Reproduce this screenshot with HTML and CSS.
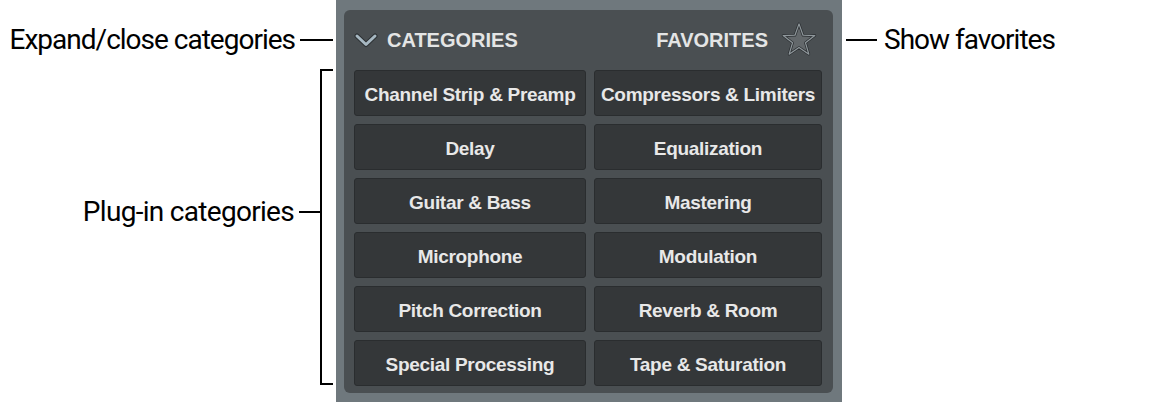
FILE: index.html
```html
<!DOCTYPE html>
<html>
<head>
<meta charset="utf-8">
<link rel="stylesheet" href="styles.css">
</head>
<body>
<div class="page">
  <div class="left">
    <div class="callout callout-top">
      <span class="note">Expand/close categories</span>
      <span class="lead lead-top"></span>
    </div>
    <div class="bracket-row">
      <div class="callout callout-mid">
        <span class="note">Plug-in categories</span>
        <span class="lead lead-mid"></span>
      </div>
      <div class="bracket"></div>
    </div>
  </div>
  <div class="outer">
    <div class="inner">
      <div class="header">
        <div class="hdr-left">
          <svg class="chev" width="24" height="16" viewBox="0 0 24 16">
            <path d="M3 3 L12 11.5 L21 3" fill="none" stroke="#2c3134" stroke-width="5" stroke-linecap="round" stroke-linejoin="round"/>
            <path d="M3 3 L12 11.5 L21 3" fill="none" stroke="#a7b8c2" stroke-width="3" stroke-linecap="round" stroke-linejoin="round"/>
          </svg>
          <span class="hdr-title">CATEGORIES</span>
        </div>
        <div class="hdr-right">
          <span class="hdr-title">FAVORITES</span>
          <svg class="star" width="38" height="36" viewBox="0 0 34 32">
            <path d="M17 2.5 L20.6 12.6 L31.2 12.9 L22.8 19.4 L25.8 29.6 L17 23.6 L8.2 29.6 L11.2 19.4 L2.8 12.9 L13.4 12.6 Z" fill="#63686b" stroke="#2a2e31" stroke-width="2.4" stroke-linejoin="round"/>
            <path d="M17 2.5 L20.6 12.6 L31.2 12.9 L22.8 19.4 L25.8 29.6 L17 23.6 L8.2 29.6 L11.2 19.4 L2.8 12.9 L13.4 12.6 Z" fill="none" stroke="#8f979b" stroke-width="1.1" stroke-linejoin="round"/>
          </svg>
        </div>
      </div>
      <div class="grid">
        <button class="cat">Channel Strip &amp; Preamp</button>
        <button class="cat">Compressors &amp; Limiters</button>
        <button class="cat">Delay</button>
        <button class="cat">Equalization</button>
        <button class="cat">Guitar &amp; Bass</button>
        <button class="cat">Mastering</button>
        <button class="cat">Microphone</button>
        <button class="cat">Modulation</button>
        <button class="cat">Pitch Correction</button>
        <button class="cat">Reverb &amp; Room</button>
        <button class="cat">Special Processing</button>
        <button class="cat">Tape &amp; Saturation</button>
      </div>
    </div>
  </div>
  <div class="right">
    <div class="callout callout-right">
      <span class="lead lead-right"></span>
      <span class="note">Show favorites</span>
    </div>
  </div>
</div>
</body>
</html>
```

FILE: styles.css
```css
html, body {
  margin: 0;
  padding: 0;
  background: #ffffff;
}
.page {
  display: flex;
  width: 1170px;
  height: 402px;
  overflow: hidden;
}
.left {
  width: 336px;
  flex: none;
  display: flex;
  flex-direction: column;
}
.note {
  font-family: Roboto, "Liberation Sans", sans-serif;
  font-size: 28px;
  letter-spacing: -1px;
  color: #000;
  white-space: nowrap;
  line-height: 1;
}
.callout-mid .note {
  letter-spacing: -0.7px;
}
.callout {
  display: flex;
  align-items: center;
}
.callout-top {
  height: 60px;
  margin-top: 10px;
  justify-content: flex-end;
  padding-right: 3px;
}
.lead {
  display: block;
  height: 2px;
  background: #000;
}
.lead-top {
  width: 33px;
  margin-left: 5px;
}
.bracket-row {
  display: flex;
  justify-content: flex-end;
  padding-right: 3px;
  margin-top: -1px;
}
.callout-mid {
  align-self: flex-start;
  height: 30px;
  margin-top: 128px;
}
.lead-mid {
  width: 21px;
  margin-left: 5px;
}
.bracket {
  width: 11px;
  height: 312px;
  border: 2px solid #000;
  border-right: none;
}
.outer {
  width: 506px;
  height: 402px;
  flex: none;
  box-sizing: border-box;
  background: #6f787d;
  padding: 10px 9px 9px 8px;
}
.inner {
  background: #4a4f52;
  border-radius: 6px;
  padding: 0 11px 7px 10px;
  height: 383px;
  box-sizing: border-box;
}
.header {
  height: 60px;
  display: flex;
  align-items: center;
  justify-content: space-between;
}
.hdr-left, .hdr-right {
  display: flex;
  align-items: center;
}
.chev {
  margin-left: 0px;
  margin-right: 9px;
  margin-top: 1px;
}
.hdr-title {
  font-family: "Liberation Sans", Arial, sans-serif;
  font-weight: bold;
  font-size: 20px;
  color: #e4e5e5;
  letter-spacing: 0;
}
.star {
  margin-left: 12px;
  margin-right: 4px;
  margin-top: -3px;
}
.grid {
  display: grid;
  grid-template-columns: 232px 228px;
  grid-auto-rows: 46px;
  column-gap: 8px;
  row-gap: 8px;
}
.cat {
  margin: 0;
  background: #343739;
  border: 1px solid #2a2d2f;
  border-radius: 3px;
  font-family: "Liberation Sans", Arial, sans-serif;
  font-weight: bold;
  font-size: 19px;
  letter-spacing: -0.3px;
  color: #e8e8e8;
  padding: 3px 0 0 0;
  white-space: nowrap;
}
.right {
  flex: 1;
  display: flex;
  flex-direction: column;
}
.callout-right {
  height: 60px;
  margin-top: 10px;
  padding-left: 4px;
}
.lead-right {
  width: 31px;
  margin-right: 7px;
}
```
